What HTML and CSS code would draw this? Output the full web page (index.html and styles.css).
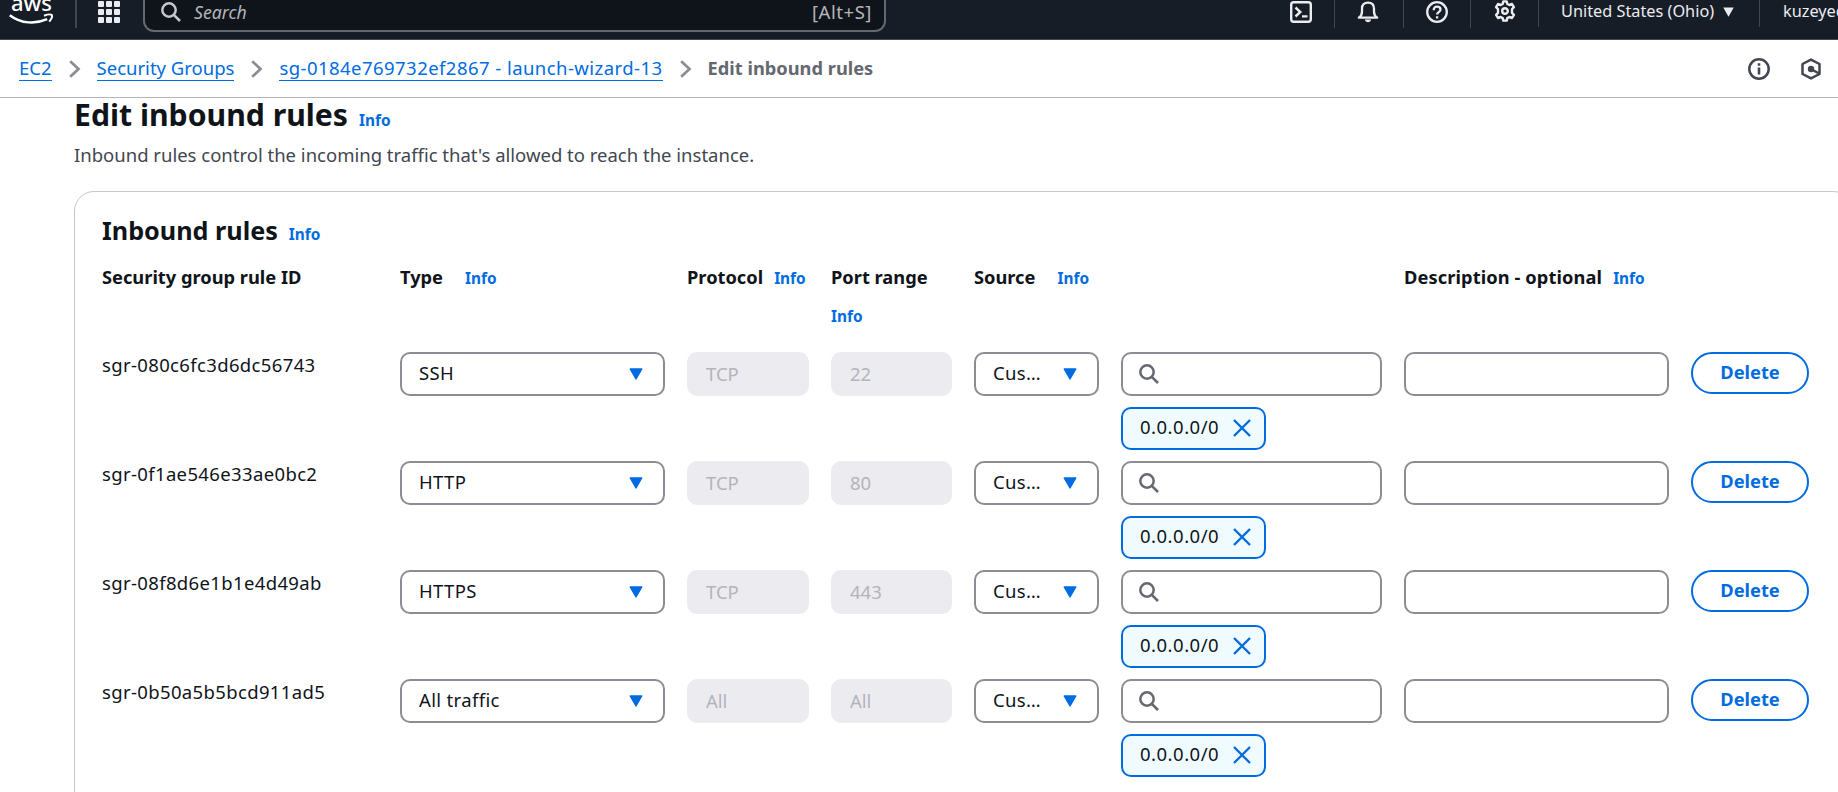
FILE: index.html
```html
<!DOCTYPE html>
<html lang="en">
<head>
<meta charset="utf-8">
<title>Edit inbound rules</title>
<link rel="stylesheet" href="styles.css">
</head>
<body>
<svg class="defs" aria-hidden="true">
  <symbol id="search" viewBox="0 0 20 20"><circle cx="8" cy="8" r="6.7" fill="none" stroke="currentColor" stroke-width="2.5"/><path d="M12.8 12.8 19 19" stroke="currentColor" stroke-width="2.6"/></symbol>
  <symbol id="caret" viewBox="0 0 14 12"><path d="M1.2 1h11.6L7 11z" fill="currentColor" stroke="currentColor" stroke-width="1.4" stroke-linejoin="round"/></symbol>
  <symbol id="close" viewBox="0 0 18 18"><path d="M1 1l16 16M17 1 1 17" stroke="currentColor" stroke-width="2.4"/></symbol>
  <symbol id="chevron" viewBox="0 0 12 18"><path d="M1.2 1.2 9.5 9l-8.3 7.8" fill="none" stroke="currentColor" stroke-width="2.7"/></symbol>
</svg>

<header class="topbar">
  <a class="logo"><svg width="46" height="39" viewBox="0 0 46 39"><text class="logo-text" x="2" y="11">aws</text><path d="M.8 15.2c11.5 8.8 26 9 37.400 4" fill="none" stroke="#fff" stroke-width="2.5"/><path d="M35 15.800c3.500-1.400 7-1.500 7.800-.8.700 1-.4 4-2.600 6.600" fill="none" stroke="#fff" stroke-width="2"/></svg></a>
  <span class="split"></span>
  <svg class="apps" width="22" height="22" viewBox="0 0 22 22" fill="#ebebf0"><rect width="6" height="6" rx="1"/><rect x="8" width="6" height="6" rx="1"/><rect x="16" width="6" height="6" rx="1"/><rect y="8" width="6" height="6" rx="1"/><rect x="8" y="8" width="6" height="6" rx="1"/><rect x="16" y="8" width="6" height="6" rx="1"/><rect y="16" width="6" height="6" rx="1"/><rect x="8" y="16" width="6" height="6" rx="1"/><rect x="16" y="16" width="6" height="6" rx="1"/></svg>
  <div class="searchbox"><svg width="20" height="20"><use href="#search"/></svg><em>Search</em><span class="hotkey">[Alt+S]</span></div>
  <nav class="tools">
    <span class="tool shell"><svg width="22" height="22" viewBox="0 0 22 22" fill="none" stroke="#ebebf0" stroke-width="2.4"><rect x="1.2" y="1.2" width="19.600" height="19.600" rx="2.500"/><path d="M5.500 6.500 10.300 11l-4.800 4.500M12 15.400h5.500"/></svg></span>
    <span class="tool bell"><svg width="22" height="24" viewBox="0 0 22 24" fill="none" stroke="#ebebf0" stroke-width="2.300" stroke-linejoin="round"><path d="M1.800 17.700c2.300-1.500 3.200-3.500 3.200-6.200V8.500C5 4.800 7.400 2.600 11 2.600s6 2.200 6 5.900v3c0 2.700.9 4.700 3.200 6.200z"/><path d="M7.800 19.500c.8 3.700 5.600 3.700 6.400 0z" fill="#ebebf0" stroke="none"/></svg></span>
    <span class="tool help"><svg width="22" height="22" viewBox="0 0 22 22" fill="none" stroke="#ebebf0" stroke-width="2.300"><circle cx="11" cy="11" r="9.800"/><path d="M7.700 9.200c0-2.300 1.300-3.600 3.400-3.600s3.400 1.200 3.400 3c0 2.600-3.400 2.500-3.400 5M11.100 15.200v2.400"/></svg></span>
    <span class="tool gear"><svg width="22" height="24" viewBox="0 0 22 24" fill="none" stroke="#ebebf0" stroke-width="2.400" stroke-linejoin="round"><path d="M8.700 3.900 9.300 1.400h3.400l.6 2.500 2 1.100 2.700-1 1.900 3.200-1.900 2v3.600l1.900 2-1.900 3.200-2.700-1-2 1.100-.6 2.500H9.300l-.6-2.500-2-1.100-2.700 1-1.900-3.200 1.900-2V9.200l-1.900-2L4 4l2.700 1z"/><circle cx="11" cy="11" r="2.800"/></svg></span>
    <span class="tool region">United States (Ohio)<svg width="11" height="10" viewBox="0 0 11 10"><path d="M.3.500h10.400L5.500 9.800z" fill="#ebebf0"/></svg></span>
    <span class="account">kuzeyec</span>
  </nav>
</header>

<nav class="crumbs">
  <a>EC2</a><svg width="12" height="18"><use href="#chevron"/></svg>
  <a>Security Groups</a><svg width="12" height="18"><use href="#chevron"/></svg>
  <a class="group">sg-0184e769732ef2867 - launch-wizard-13</a><svg width="12" height="18"><use href="#chevron"/></svg>
  <b>Edit inbound rules</b>
  <span class="panel-icons">
    <svg width="22" height="22" viewBox="0 0 22 22"><circle cx="11" cy="11" r="9.700" fill="none" stroke="#424650" stroke-width="2.500"/><path d="M11 5.300v2.500M11 9.500v7" stroke="#424650" stroke-width="2.600"/></svg>
    <svg width="20" height="22" viewBox="0 0 20 22"><path d="M10 1.600 18.500 6v10L10 20.400 1.500 16V6z" fill="none" stroke="#424650" stroke-width="2.500" stroke-linejoin="round"/><circle cx="10" cy="11" r="3.200" fill="#424650"/><path d="M10 11l8 4.500" stroke="#424650" stroke-width="2.500"/></svg>
  </span>
</nav>

<main class="page">
  <h1>Edit inbound rules<a class="info">Info</a></h1>
  <p class="lead">Inbound rules control the incoming traffic that's allowed to reach the instance.</p>
  <section class="card">
    <h2>Inbound rules<a class="info">Info</a></h2>
    <div class="grid heads">
      <span>Security group rule ID</span>
      <span>Type<a class="info wide">Info</a></span>
      <span>Protocol<a class="info">Info</a></span>
      <span>Port range<br><a class="info wrapped">Info</a></span>
      <span>Source<a class="info wide">Info</a></span>
      <span></span>
      <span class="desc">Description - optional<a class="info">Info</a></span>
    </div>
    <div class="grid rule">
      <span class="id">sgr-080c6fc3d6dc56743</span>
      <div class="field">SSH<svg width="14" height="12"><use href="#caret"/></svg></div>
      <div class="field off">TCP</div><div class="field off">22</div>
      <div class="field small">Cus…<svg width="14" height="12"><use href="#caret"/></svg></div>
      <div class="source"><div class="field find"><svg width="20" height="20"><use href="#search"/></svg></div><div class="token">0.0.0.0/0<svg width="18" height="18"><use href="#close"/></svg></div></div>
      <div class="field"></div><div class="delete">Delete</div>
    </div>
    <div class="grid rule">
      <span class="id">sgr-0f1ae546e33ae0bc2</span>
      <div class="field">HTTP<svg width="14" height="12"><use href="#caret"/></svg></div>
      <div class="field off">TCP</div><div class="field off">80</div>
      <div class="field small">Cus…<svg width="14" height="12"><use href="#caret"/></svg></div>
      <div class="source"><div class="field find"><svg width="20" height="20"><use href="#search"/></svg></div><div class="token">0.0.0.0/0<svg width="18" height="18"><use href="#close"/></svg></div></div>
      <div class="field"></div><div class="delete">Delete</div>
    </div>
    <div class="grid rule">
      <span class="id">sgr-08f8d6e1b1e4d49ab</span>
      <div class="field">HTTPS<svg width="14" height="12"><use href="#caret"/></svg></div>
      <div class="field off">TCP</div><div class="field off">443</div>
      <div class="field small">Cus…<svg width="14" height="12"><use href="#caret"/></svg></div>
      <div class="source"><div class="field find"><svg width="20" height="20"><use href="#search"/></svg></div><div class="token">0.0.0.0/0<svg width="18" height="18"><use href="#close"/></svg></div></div>
      <div class="field"></div><div class="delete">Delete</div>
    </div>
    <div class="grid rule">
      <span class="id">sgr-0b50a5b5bcd911ad5</span>
      <div class="field">All traffic<svg width="14" height="12"><use href="#caret"/></svg></div>
      <div class="field off">All</div><div class="field off">All</div>
      <div class="field small">Cus…<svg width="14" height="12"><use href="#caret"/></svg></div>
      <div class="source"><div class="field find"><svg width="20" height="20"><use href="#search"/></svg></div><div class="token">0.0.0.0/0<svg width="18" height="18"><use href="#close"/></svg></div></div>
      <div class="field"></div><div class="delete">Delete</div>
    </div>
  </section>
</main>
</body>
</html>
```
FILE: styles.css
```css
* { box-sizing: border-box; }
html, body { height: 100%; }
body {
  margin: 0;
  overflow: hidden;
  display: flex;
  flex-direction: column;
  background: #fff;
  color: #0f141a;
  font: 18.5px/24px "Noto Sans", "Open Sans", sans-serif;
}
svg { flex: none; display: block; }
.defs { display: none; }

/* Top navigation */
.topbar {
  flex: none;
  display: flex;
  align-items: flex-start;
  height: 40px;
  background: #161d26;
  border-bottom: 1px solid #424650;
  overflow: hidden;
  color: #ebebf0;
}
.logo { margin-left: 9px; }
.logo-text { font-size: 22px; font-weight: 500; fill: #fff; }
.split { flex: none; width: 2px; height: 28px; margin-left: 20px; background: #424650; }
.apps { margin: 1px 0 0 21px; }
.searchbox {
  flex: none;
  display: flex;
  align-items: flex-start;
  width: 743px;
  height: 32px;
  margin-left: 23px;
  padding: 0 12px 0 16px;
  border: 2px solid #656871;
  border-top: 0;
  border-radius: 0 0 11px 11px;
  background: #0f141a;
  color: #b4b4bb;
}
.searchbox svg { margin-top: 2px; color: #c6c6cd; }
.searchbox em { margin-left: 13px; font-size: 17.7px; }
.hotkey { margin-left: auto; letter-spacing: .55px; }
.tools { flex: none; display: flex; margin-left: 404px; }
.tool { display: flex; flex: none; height: 28px; border-right: 1px solid #424650; }
.shell { width: 45px; padding-top: 1px; }
.bell { width: 69px; padding-left: 22px; }
.help { width: 67px; padding: 1px 0 0 22px; }
.gear { width: 68px; height: 27px; padding-left: 23px; }
.region { width: 221px; height: 27px; padding-left: 22px; font-size: 16.3px; line-height: 23px; white-space: nowrap; }
.region svg { margin: 7px 0 0 9px; }
.account { padding-left: 23px; font-size: 16.3px; line-height: 23px; }

/* Breadcrumb bar */
.crumbs {
  flex: none;
  display: flex;
  align-items: flex-start;
  height: 58px;
  padding: 17px 17px 0 19px;
  border-bottom: 1px solid #b4b4bb;
  line-height: 22px;
  white-space: nowrap;
}
.crumbs a { height: 24px; border-bottom: 1px solid #006ce0; color: #006ce0; }
.crumbs .group { letter-spacing: .45px; }
.crumbs > svg { margin: 3px 16px 0 17px; color: #8c8c94; }
.crumbs b { font-weight: 700; font-size: 18.25px; color: #656871; }
.panel-icons { display: flex; gap: 31px; margin: 1px 0 0 auto; }

/* Page content */
.page { flex: 1; min-height: 0; overflow: hidden; padding: 2px 0 0 74px; }
h1 { margin: 0; font-size: 30.2px; line-height: 30px; font-weight: 700; }
.info { margin-left: 11px; font-size: 15.4px; line-height: 1; font-weight: 700; letter-spacing: 0; color: #006ce0; }
.lead { margin: 13px 0 24px; color: #424650; }
.card {
  width: 1779px;
  height: 700px;
  padding: 21px 0 0 27px;
  border: 1px solid #c6c6cd;
  border-radius: 20px;
}
h2 { margin: 0 0 11px; font-size: 25.2px; line-height: 34px; font-weight: 700; }
.grid {
  display: grid;
  grid-template-columns: 276px 265px 122px 121px 125px 261px 265px 118px;
  column-gap: 22px;
  align-items: start;
}
.heads { height: 76px; margin-bottom: 18px; font-size: 18.25px; line-height: 38px; font-weight: 700; }
.wide { margin-left: 22px; }
.wrapped { margin-left: 0; }
.desc { letter-spacing: .1px; white-space: nowrap; }
.rule { height: 109px; }
.id { margin-top: 1px; letter-spacing: .36px; }
.field {
  display: flex;
  align-items: center;
  justify-content: space-between;
  height: 44px;
  padding: 0 20px 2px 17px;
  border: 2px solid #8c8c94;
  border-radius: 10px;
  letter-spacing: .35px;
}
.field svg { margin-top: 2px; color: #006ce0; }
.off { padding-bottom: 0; border-color: #ebebf0; background: #ebebf0; color: #b4b4bb; letter-spacing: 0; }
.find { padding-left: 16px; }
.find svg { color: #656871; }
.token {
  display: flex;
  align-items: center;
  justify-content: space-between;
  width: 145px;
  height: 43px;
  margin-top: 11px;
  padding: 0 13px 3px 17px;
  border: 2px solid #006ce0;
  border-radius: 10px;
  background: #f0fbff;
  letter-spacing: .5px;
}
.token svg { margin-top: 2px; color: #006ce0; }
.delete {
  height: 42px;
  border: 2px solid #006ce0;
  border-radius: 21px;
  color: #006ce0;
  font-size: 18.25px;
  font-weight: 700;
  line-height: 36px;
  text-align: center;
}
```
